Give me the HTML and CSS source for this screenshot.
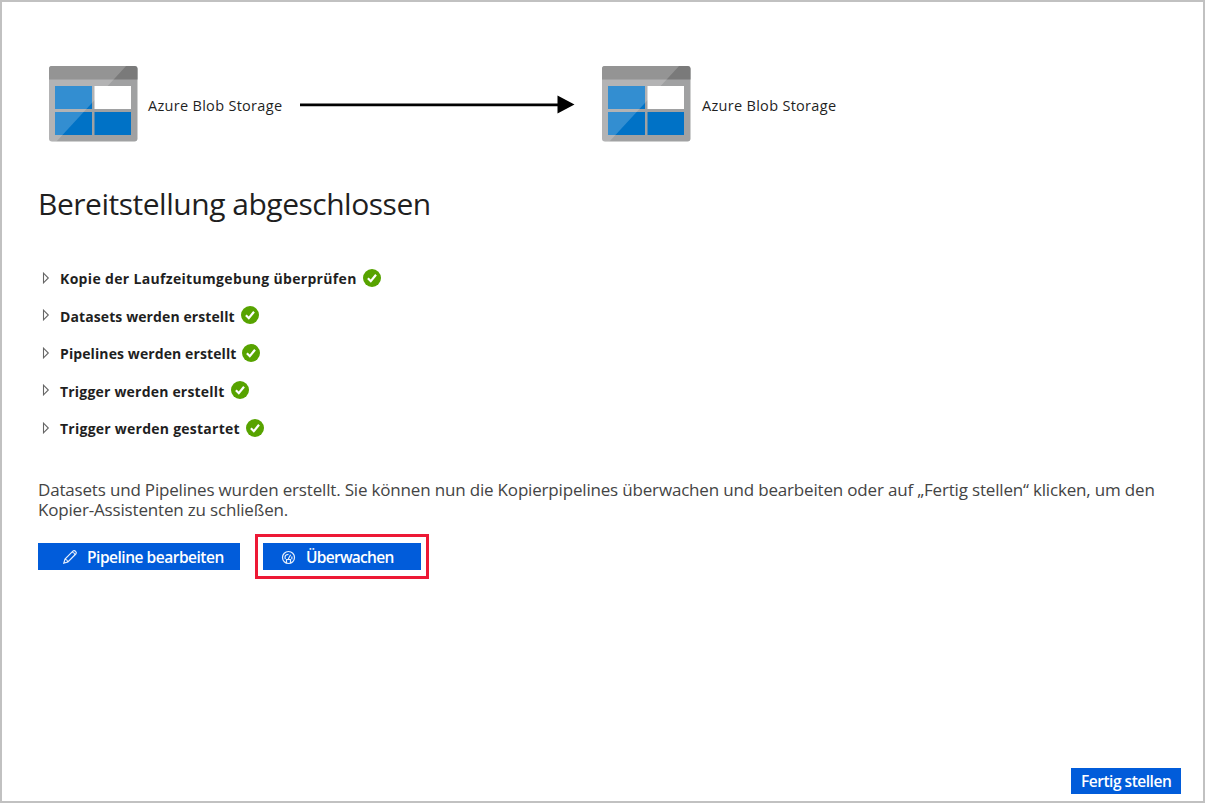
FILE: index.html
```
<!DOCTYPE html>
<html lang="de">
<head>
<meta charset="utf-8">
<title>Bereitstellung abgeschlossen</title>
<link rel="stylesheet" href="styles.css">
</head>
<body>
<svg class="defs" width="0" height="0" aria-hidden="true">
  <symbol id="storage" viewBox="0 0 90 77">
    <clipPath id="frame"><rect x="1" y="1" width="88.500" height="75.500" rx="3"/></clipPath>
    <g clip-path="url(#frame)">
      <path fill="#a0a1a2" d="M0 0H90V77H0z"/>
      <path fill="#7a7a7a" d="M0 0H90V14.500H0z"/>
      <path fill="#0072c6" d="M7 21H44V44H7zM7 47H44V70H7zM46.500 47H83V70H46.500z"/>
      <path fill="#fff" fill-opacity=".2" d="M0 0H79L8 77H0z"/>
      <path fill="#fff" d="M46.500 21H83V44H46.500z"/>
    </g>
  </symbol>
  <symbol id="check" viewBox="0 0 18 18">
    <circle cx="9" cy="9" r="9" fill="#57a300"/>
    <path d="M4.900 9.200L7.800 12.200L13 5.800" fill="none" stroke="#fff" stroke-width="2.200"/>
  </symbol>
  <symbol id="caret" viewBox="0 0 8 12">
    <path d="M1.500 1.200V10.800L6.300 6z" fill="#fff" stroke="#666" stroke-width="1.100"/>
  </symbol>
</svg>
<main class="page">
  <section class="flow">
    <svg class="storage"><use href="#storage"/></svg>
    <span class="flow-label">Azure Blob Storage</span>
    <svg class="arrow" viewBox="0 0 276 20"><path d="M1 9.500H258.500V1.500L275.500 10.500L258.500 19.500V12.200H1z"/></svg>
    <svg class="storage"><use href="#storage"/></svg>
    <span class="flow-label target">Azure Blob Storage</span>
  </section>
  <h1 class="title">Bereitstellung abgeschlossen</h1>
  <ul class="steps">
    <li class="step"><svg class="caret"><use href="#caret"/></svg><span class="step-name wide">Kopie der Laufzeitumgebung überprüfen</span><svg class="check"><use href="#check"/></svg></li>
    <li class="step"><svg class="caret"><use href="#caret"/></svg><span class="step-name tight">Datasets werden erstellt</span><svg class="check"><use href="#check"/></svg></li>
    <li class="step"><svg class="caret"><use href="#caret"/></svg><span class="step-name tight">Pipelines werden erstellt</span><svg class="check"><use href="#check"/></svg></li>
    <li class="step"><svg class="caret"><use href="#caret"/></svg><span class="step-name">Trigger werden erstellt</span><svg class="check"><use href="#check"/></svg></li>
    <li class="step"><svg class="caret"><use href="#caret"/></svg><span class="step-name last">Trigger werden gestartet</span><svg class="check"><use href="#check"/></svg></li>
  </ul>
  <p class="summary">Datasets und Pipelines wurden erstellt. Sie können nun die Kopierpipelines überwachen und bearbeiten oder auf „Fertig stellen“ klicken, um den<br>Kopier-Assistenten zu schließen.</p>
  <div class="actions">
    <button class="button edit"><svg class="icon" viewBox="0 0 16 16"><path d="M1.800 14.200L3 10L10.900 2.100Q12.200 .9 13.600 2.300Q15 3.800 13.800 5L5.900 13zM3 10Q5.200 10.500 5.900 13M10 3Q12.500 3.500 13 5.900"/></svg><span>Pipeline bearbeiten</span></button>
    <div class="highlight"><button class="button monitor"><svg class="icon" viewBox="0 0 16 16"><circle cx="7.500" cy="8.500" r="6"/><path d="M5.500 14V10.500H9.500V14M7.300 10L9.600 5.800M4.300 10.200Q3 5.500 7.500 5.300M10.700 7.500Q11.200 9 10.700 10.200"/></svg><span>Überwachen</span></button></div>
  </div>
  <footer class="footer"><button class="button finish"><span>Fertig stellen</span></button></footer>
</main>
</body>
</html>
```
FILE: styles.css
```
* { box-sizing: border-box; }
body { margin: 0; font-family: "Open Sans", "Noto Sans", sans-serif; color: #1f1f1f; background: #fff; }
.defs { position: absolute; }
.page { width: 1205px; height: 803px; border: 2px solid #c1c1c1; padding: 63px 22px 7px 36px; display: flex; flex-direction: column; overflow: hidden; }
.flow { display: flex; align-items: center; height: 77px; padding-left: 10px; }
.storage { width: 90px; height: 77px; flex: none; }
.flow-label { width: 136px; margin-left: 10px; font-size: 14.500px; font-weight: 500; line-height: 20px; white-space: nowrap; letter-spacing: .3px; padding-top: 4px; }
.target { margin-left: 11px; }
.arrow { width: 276px; height: 20px; margin: 0 26px 0 15px; flex: none; }
.title { margin: 42px 0 0; height: 40px; font-size: 30px; line-height: 40px; font-weight: 400; letter-spacing: -.480px; white-space: nowrap; }
.steps { list-style: none; margin: 35px 0 0; padding: 0 0 0 4px; }
.step { height: 37.500px; display: flex; align-items: center; }
.caret { width: 8px; height: 12px; margin-right: 10px; }
.step-name { font-size: 14px; font-weight: 700; line-height: 20px; letter-spacing: .2px; white-space: nowrap; padding-top: 3px; }
.wide { letter-spacing: .330px; }
.tight { letter-spacing: .1px; }
.last { letter-spacing: .250px; }
.check { width: 18px; height: 18px; margin-left: 6px; }
.summary { margin: 33px 0 0; height: 40px; color: #444; font-size: 17px; line-height: 20px; letter-spacing: -.178px; white-space: nowrap; }
.actions { display: flex; margin-top: 14px; gap: 15px; height: 45px; align-items: center; }
.button { display: flex; align-items: center; height: 27px; margin: 0; border: 0; padding: 0; color: #fff; background: #015cda; font: 600 15.500px/26px "Open Sans", "Noto Sans", sans-serif; letter-spacing: -.480px; white-space: nowrap; }
.edit { width: 202px; padding: 1px 0 0 24px; }
.monitor { width: 158px; padding: 1px 0 0 18px; letter-spacing: -.720px; }
.highlight { width: 174px; height: 45px; border: 3px solid #ed1835; display: flex; align-items: center; padding-left: 5px; }
.icon { width: 16px; height: 16px; margin-right: 9px; fill: none; stroke: #e6effc; stroke-width: 1.200; }
.footer { margin-top: auto; display: flex; justify-content: flex-end; }
.finish { width: 110px; height: 26px; padding-left: 10px; }
```
